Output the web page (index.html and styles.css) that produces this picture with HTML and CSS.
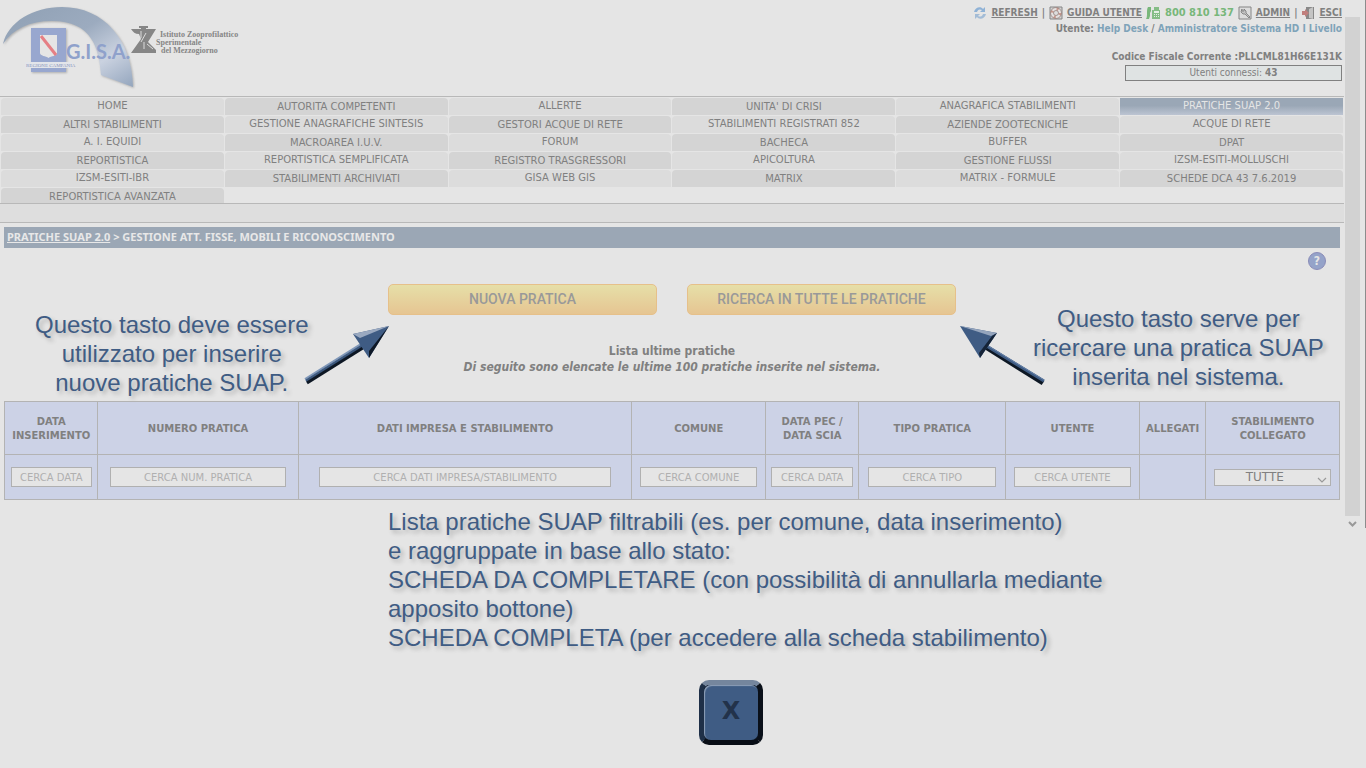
FILE: index.html
```html
<!DOCTYPE html>
<html lang="it">
<head>
<meta charset="utf-8">
<title>G.I.S.A. - Pratiche SUAP 2.0</title>
<link rel="stylesheet" href="styles.css">
</head>
<body>
<div class="window">
  <div class="page">
    <header class="header">
      <svg class="logo" width="245" height="94" viewBox="0 0 245 94" role="img" aria-label="G.I.S.A. Regione Campania">
        <defs>
          <linearGradient id="arc" x1="0" y1="0" x2="1" y2="1">
            <stop offset="0" stop-color="#8fa0b4"/><stop offset=".45" stop-color="#9cabbf"/>
            <stop offset=".72" stop-color="#cad2e0"/><stop offset="1" stop-color="#93a5bd"/>
          </linearGradient>
          <filter id="soft" x="-10%" y="-10%" width="120%" height="120%"><feDropShadow dx="1" dy="1" stdDeviation="1" flood-color="#888" flood-opacity=".6"/></filter>
        </defs>
        <path d="M3 44C8 22 33 7 62 7c42 0 70 33 71 80l-32-12C99 48 92 21 52 21 29 21 13 29 3 44z" fill="url(#arc)" filter="url(#soft)"/>
        <path d="M31 28h35v44H31z" fill="#98a7cf" filter="url(#soft)"/>
        <path d="M40 35h17v18c0 3-6 3-8.500 5C46 56 40 56 40 53z" fill="#e5e5e5"/>
        <path d="M41 36l15 19" stroke="#e57f85" stroke-width="3"/>
        <path d="M25 62h47v6H25z" fill="#e3e5ea"/>
        <text x="26" y="67" class="logo-region">REGIONE CAMPANIA</text>
        <text x="66" y="59" class="logo-name">G.I.S.A.</text>
        <path d="M131 29h25l-8 13 8 8v3h-25l10-14-2-5c-4 0-6-2-8-5z" fill="#868686"/>
        <path d="M139 26h9v2h-2v3h-5v-3h-2z" fill="#868686"/>
        <path d="M141 31v7M146 33l-5 9M144 42v7M147 44l6 5" fill="none" stroke="#dcdcdc"/>
        <g class="logo-institute"><text x="160" y="37">Istituto Zooprofilattico</text><text x="156" y="45">Sperimentale</text><text x="161" y="53">del Mezzogiorno</text></g>
      </svg>
      <div class="account">
        <div class="tools">
          <svg width="14" height="14" viewBox="0 0 14 14"><path d="M1 6c1-5 7-6 9-3l2-2v5H7l2-2C7 3 5 3 4 6z" fill="#8fb2d6"/><path d="M13 8c-1 5-7 6-9 3l-2 2V8h5l-2 2c2 1 4 1 5-2z" fill="#a3bcd6"/></svg>
          <a href="#">REFRESH</a><span>|</span>
          <svg width="14" height="14" viewBox="0 0 14 14"><path d="M1 1h12v12H1z" fill="#d2d2d2" stroke="#858585"/><circle cx="7" cy="7" r="4" fill="none" stroke="#e4e2e1" stroke-width="3"/><circle cx="7" cy="7" r="4" fill="none" stroke="#c9998e" stroke-width="3" stroke-dasharray="2 4.300"/><circle cx="7" cy="7" r="5.500" fill="none" stroke="#8d7773" stroke-width=".7"/><circle cx="7" cy="7" r="2.500" fill="#ddd" stroke="#8d7773" stroke-width=".7"/></svg>
          <a href="#">GUIDA UTENTE</a>
          <svg width="15" height="14" viewBox="0 0 15 14"><path d="M2 1h3v4l-1 2v3l-1 3H0c2-3 0-9 2-12z" fill="#78b77a"/><path d="M6 4h8v9H6zM8 1h5v3H8z" fill="#85bd86"/><path d="M8 5h5v2H8zM8 8h1v1H8zm2 0h1v1h-1zm2 0h1v1h-1zM8 10h1v1H8zm2 0h1v1h-1zm2 0h1v1h-1z" fill="#e3efe3"/></svg>
          <span class="phone">800 810 137</span>
          <svg width="14" height="14" viewBox="0 0 14 14"><path d="M1 1h12v12H1z" fill="#ddd" stroke="#858585"/><path d="M4 3L3 6l2 2h2l4 4 1-1-4-4V5L6 3v2H4z" fill="#c4c4c4" stroke="#777" stroke-width=".8"/></svg>
          <a href="#">ADMIN</a><span>|</span>
          <svg width="14" height="14" viewBox="0 0 14 14"><path d="M5 1h8v12H5z" fill="#888"/><path d="M8 3l4-2v12l-4-1z" fill="#c4c4c4"/><path d="M1 5h3V3l4 4-4 4V9H1z" fill="#c07e7c"/></svg>
          <a href="#">ESCI</a>
        </div>
        <div>Utente: <span class="user">Help Desk</span> / <span class="user">Amministratore Sistema HD I Livello</span></div>
        <div class="fiscal">Codice Fiscale Corrente :PLLCML81H66E131K</div>
        <div class="online">Utenti connessi: <b>43</b></div>
      </div>
    </header>
    <nav class="menu">
      <a href="#">HOME</a><a href="#" class="dark">AUTORITA COMPETENTI</a><a href="#">ALLERTE</a><a href="#" class="dark">UNITA' DI CRISI</a><a href="#">ANAGRAFICA STABILIMENTI</a><a href="#" class="active">PRATICHE SUAP 2.0</a>
      <a href="#" class="dark">ALTRI STABILIMENTI</a><a href="#">GESTIONE ANAGRAFICHE SINTESIS</a><a href="#" class="dark">GESTORI ACQUE DI RETE</a><a href="#">STABILIMENTI REGISTRATI 852</a><a href="#" class="dark">AZIENDE ZOOTECNICHE</a><a href="#">ACQUE DI RETE</a>
      <a href="#">A. I. EQUIDI</a><a href="#" class="dark">MACROAREA I.U.V.</a><a href="#">FORUM</a><a href="#" class="dark">BACHECA</a><a href="#">BUFFER</a><a href="#" class="dark">DPAT</a>
      <a href="#" class="dark">REPORTISTICA</a><a href="#">REPORTISTICA SEMPLIFICATA</a><a href="#" class="dark">REGISTRO TRASGRESSORI</a><a href="#">APICOLTURA</a><a href="#" class="dark">GESTIONE FLUSSI</a><a href="#">IZSM-ESITI-MOLLUSCHI</a>
      <a href="#">IZSM-ESITI-IBR</a><a href="#" class="dark">STABILIMENTI ARCHIVIATI</a><a href="#">GISA WEB GIS</a><a href="#" class="dark">MATRIX</a><a href="#">MATRIX - FORMULE</a><a href="#" class="dark">SCHEDE DCA 43 7.6.2019</a>
      <a href="#" class="dark">REPORTISTICA AVANZATA</a>
    </nav>
    <div class="strip"></div>
    <main class="content">
      <div class="trail"><a href="#">PRATICHE SUAP 2.0</a> &gt; GESTIONE ATT. FISSE, MOBILI E RICONOSCIMENTO</div>
      <div class="help-row"><button class="help" type="button">?</button></div>
      <div class="actions"><button type="button">NUOVA PRATICA</button><button type="button">RICERCA IN TUTTE LE PRATICHE</button></div>
      <div class="caption">Lista ultime pratiche<br><i>Di seguito sono elencate le ultime 100 pratiche inserite nel sistema.</i></div>
      <table class="list">
        <colgroup><col class="c-date"><col class="c-number"><col class="c-company"><col class="c-town"><col class="c-pec"><col class="c-type"><col class="c-user"><col class="c-files"><col class="c-plant"></colgroup>
        <thead>
          <tr><th>DATA<br>INSERIMENTO</th><th>NUMERO PRATICA</th><th>DATI IMPRESA E STABILIMENTO</th><th>COMUNE</th><th>DATA PEC /<br>DATA SCIA</th><th>TIPO PRATICA</th><th>UTENTE</th><th>ALLEGATI</th><th>STABILIMENTO<br>COLLEGATO</th></tr>
        </thead>
        <tbody>
          <tr>
            <td><input aria-label="Data inserimento" placeholder="CERCA DATA"></td>
            <td><input aria-label="Numero pratica" placeholder="CERCA NUM. PRATICA"></td>
            <td><input aria-label="Dati impresa e stabilimento" placeholder="CERCA DATI IMPRESA/STABILIMENTO"></td>
            <td><input aria-label="Comune" placeholder="CERCA COMUNE"></td>
            <td><input aria-label="Data PEC / data SCIA" placeholder="CERCA DATA"></td>
            <td><input aria-label="Tipo pratica" placeholder="CERCA TIPO"></td>
            <td><input aria-label="Utente" placeholder="CERCA UTENTE"></td>
            <td></td>
            <td><div class="pick"><select aria-label="Stabilimento collegato"><option>TUTTE</option></select><svg width="10" height="6" viewBox="0 0 10 6"><path d="M1 1l4 4 4-4" fill="none" stroke="#999" stroke-width="1.200"/></svg></div></td>
          </tr>
        </tbody>
      </table>
    </main>
  </div>
  <div class="scroll"><div class="thumb"></div><svg width="9" height="7" viewBox="0 0 9 7"><path d="M1 1l3.500 3.500L8 1" fill="none" stroke="#999" stroke-width="2"/></svg></div>
</div>

<div class="guide">
  <p class="note note-new">Questo tasto deve essere<br>utilizzato per inserire<br>nuove pratiche SUAP.</p>
  <p class="note note-search">Questo tasto serve per<br>ricercare una pratica SUAP<br>inserita nel sistema.</p>
  <svg class="arrow arrow-new" width="90" height="64" viewBox="0 0 90 64">
    <path d="M3 56L62 19" stroke="#7f97b9" stroke-width="2"/><path d="M4 58L63 21" stroke="#3c587e" stroke-width="3"/><path d="M5 60L64 23" stroke="#0d1724" stroke-width="3"/>
    <path d="M87 3L67 35 51 11z" fill="#3f5c84"/><path d="M87 3L51 11l7 4z" fill="#9aa9c0"/><path d="M87 3L67 35l0-7z" fill="#0e1826"/>
  </svg>
  <svg class="arrow arrow-search" width="90" height="64" viewBox="0 0 90 64">
    <path d="M27 23L86 60" stroke="#0d1724" stroke-width="5"/><path d="M28 22L87 58" stroke="#3f5c84" stroke-width="3"/><path d="M28 21L87 57" stroke="#6782a8" stroke-width="1"/>
    <path d="M3 3l37 7-17 25z" fill="#3f5c84"/><path d="M3 3l37 7-6 3z" fill="#95a5bd"/><path d="M40 10L23 35l-1-5 13-17z" fill="#152337"/>
  </svg>
  <p class="note note-list">Lista pratiche SUAP filtrabili (es. per comune, data inserimento)<br>e raggruppate in base allo stato:<br>SCHEDA DA COMPLETARE (con possibilità di annullarla mediante<br>apposito bottone)<br>SCHEDA COMPLETA (per accedere alla scheda stabilimento)</p>
  <button class="close" type="button"><span>X</span></button>
</div>
</body>
</html>
```
FILE: styles.css
```css
* { box-sizing: border-box; }
body {
  margin: 0;
  position: relative;
  min-height: 100vh;
  background: #e5e5e5;
  color: #808080;
  font-family: "DejaVu Sans", Verdana, sans-serif;
  font-size: 10px;
}
.window { display: flex; border-right: 1px solid #8c8c8c; }
.page { flex: 1; min-width: 0; padding-bottom: 28px; }
.scroll {
  width: 15px;
  margin: 0 5px 0 1px;
  padding-top: 17px;
  display: flex;
  flex-direction: column;
  align-items: center;
  gap: 5px;
}
.thumb { flex: 1; width: 100%; background: #d2d2d2; }
.scroll svg { flex: none; }

.header { display: flex; justify-content: space-between; height: 96px; }
.account {
  padding: 5px 2px 0 0;
  font-family: "DejaVu Sans Condensed", Tahoma, sans-serif;
  font-weight: bold;
  line-height: 16px;
  text-align: right;
}
.tools { display: flex; align-items: center; justify-content: flex-end; gap: 4px; height: 16px; }
.account a { color: inherit; }
.phone { color: #78b77a; font-size: 11px; }
.user { color: #7fa3b9; }
.fiscal { padding-top: 12px; }
.online {
  width: 217px;
  height: 16px;
  margin-left: auto;
  border: 1px solid #808080;
  background: #dfe3e3;
  font-size: 10px;
  font-weight: normal;
  line-height: 14px;
  text-align: center;
}
.logo-region { font: 5px "Liberation Serif", serif; fill: #8793bb; }
.logo-name { font: bold 20px Lato, sans-serif; fill: #8fa1cb; }
.logo-institute { font: bold 8px "Liberation Serif", serif; fill: #858585; }

.menu {
  display: grid;
  grid-template-columns: repeat(6, 1fr);
  grid-auto-rows: 17px;
  gap: 1px;
  padding: 1px 1px 0;
  height: 107px;
  overflow: hidden;
  border-top: 1px solid #b8b8b8;
}
.menu a {
  background: #dcdcdc;
  border-radius: 4px 4px 0 0;
  color: inherit;
  line-height: 15px;
  text-align: center;
  text-decoration: none;
}
.menu .dark { background: #d4d4d4; line-height: 18px; }
.menu .active {
  background: linear-gradient(#9aa7b6 45%, #bcc4d2);
  border-radius: 0;
  color: #e5e5e5;
}
.strip { height: 20px; background: #dedede; border: solid #b8b8b8; border-width: 1px 0; }

.content { padding: 4px 4px 0; }
.trail {
  height: 21px;
  padding-left: 3px;
  background: #9ba7b5;
  color: #e8e8e8;
  font: bold 11px/19px "Noto Sans", sans-serif;
}
.trail a { color: inherit; }
.help-row { display: flex; justify-content: flex-end; padding: 4px 14px 0; }
.help {
  width: 18px;
  height: 18px;
  padding: 0;
  border: 1px solid #8a8cb8;
  border-radius: 50%;
  background: #95a3c9;
  color: #e5e5e5;
  font: bold 12px/14px "DejaVu Sans Condensed", sans-serif;
}
.actions { display: flex; justify-content: center; gap: 30px; padding-top: 14px; }
.actions button {
  width: 269px;
  height: 31px;
  padding: 0 0 2px;
  border: 1px solid #e6c08a;
  border-radius: 5px;
  background: linear-gradient(#e6dfa8, #e6c592);
  color: #999;
  font: 500 14px Roboto, sans-serif;
}
.caption {
  padding: 28px 0 26px;
  font: bold 12px/16px "DejaVu Sans Condensed", Tahoma, sans-serif;
  text-align: center;
}
.list { width: 100%; border-collapse: collapse; table-layout: fixed; background: #ccd2e6; }
.list th, .list td { border: 1px solid #b3b3b3; padding: 0; text-align: center; }
.list th { height: 53px; padding-top: 1px; line-height: 14px; }
.list td { height: 45px; }
.c-date, .c-pec { width: 7%; }
.c-number { width: 15%; }
.c-company { width: 25%; }
.c-town, .c-user, .c-plant { width: 10%; }
.c-type { width: 11%; }
.c-files { width: 5%; }
.list input {
  display: block;
  width: 88%;
  height: 20px;
  margin: auto;
  padding: 0;
  border: 1px solid #b0b0b0;
  background: #e5e5e5;
  font: 10px "DejaVu Sans", sans-serif;
  text-align: center;
}
.list input::placeholder { color: #b0b0b0; opacity: 1; }
.pick { position: relative; width: 88%; margin: auto; }
.pick select {
  display: block;
  width: 100%;
  height: 17px;
  padding: 0 16px 0 0;
  appearance: none;
  border: 1px solid #b0b0b0;
  border-radius: 0;
  background: #e5e5e5;
  color: #808080;
  font: 12px "DejaVu Sans", sans-serif;
  text-align: center;
}
.pick svg { position: absolute; right: 4px; top: 8px; pointer-events: none; }

.note {
  position: absolute;
  margin: 0;
  color: #3f5c84;
  font: 24px/29px "Liberation Sans", Arial, sans-serif;
  text-shadow: 3px 3px 4px #b0b0b0;
  white-space: nowrap;
  text-align: center;
}
.note-new { left: 35px; top: 310px; }
.note-search { left: 1033px; top: 304px; }
.note-list { left: 388px; top: 507px; text-align: left; }
.arrow { position: absolute; top: 323px; }
.arrow-new { left: 302px; }
.arrow-search { left: 957px; }
.close {
  position: absolute;
  left: 699px;
  top: 680px;
  width: 64px;
  height: 65px;
  padding: 0;
  border: 5px solid;
  border-color: #75869d #0a1019 #080d15 #1f3048;
  border-radius: 10px;
  background: #0f1a29;
  color: #22324a;
  font: bold 24px/52px "DejaVu Sans", sans-serif;
}
.close span {
  display: block;
  height: 100%;
  border-radius: 7px;
  background: #3f5c84;
  box-shadow: inset 1px 1px 1px #8fa0b8;
}
```
